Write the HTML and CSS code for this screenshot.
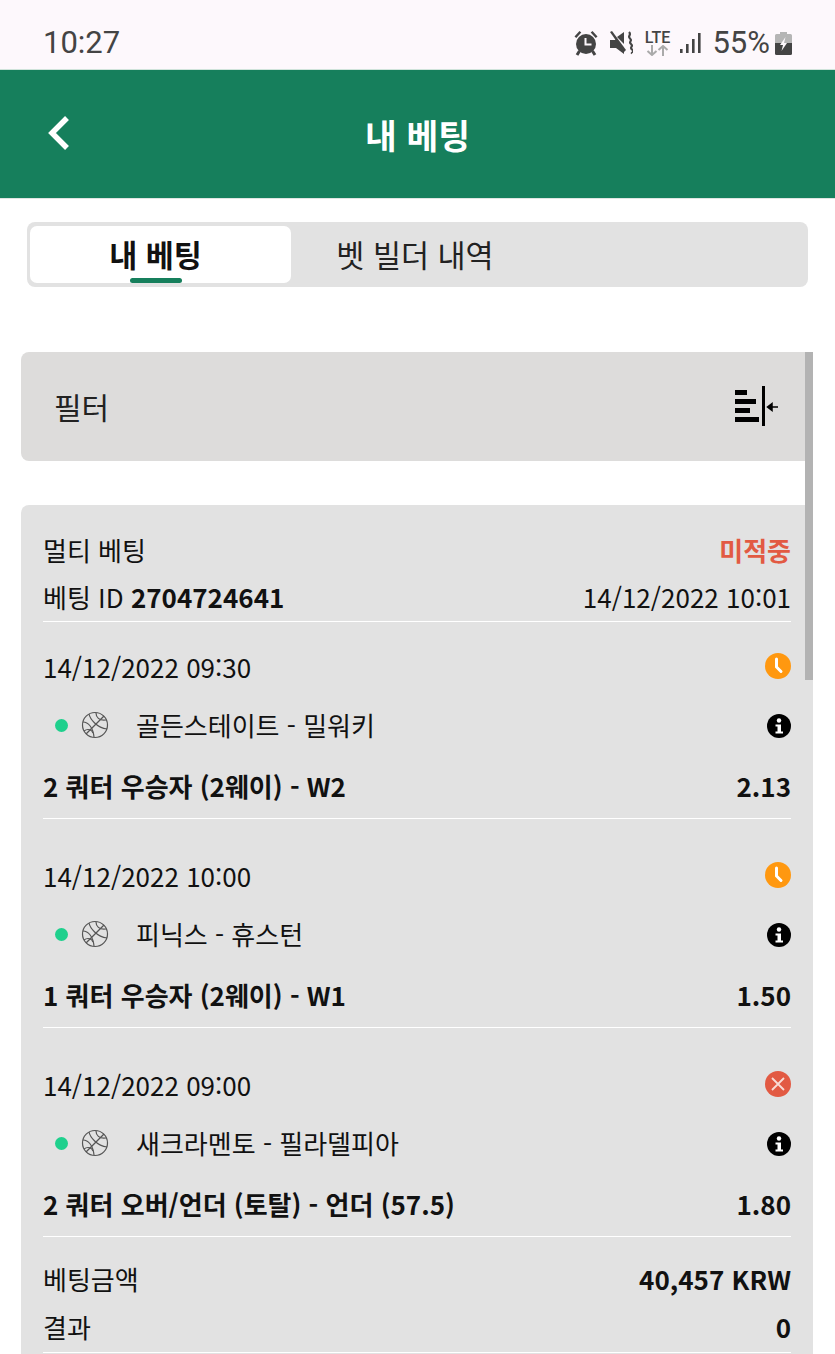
FILE: index.html
```html
<!DOCTYPE html>
<html lang="ko">

<head>
    <meta charset="UTF-8">
    <meta name="viewport" content="width=device-width, initial-scale=1.0">
    <title>내 베팅</title>
    <link rel="stylesheet" href="styles.css">
</head>

<body>
    <div class="status-bar">
        <span class="clock">10:27</span>
        <div class="status-icons">
            <svg width="24" height="26" viewBox="0 0 24 26" class="ic-alarm">
                <path d="M0.500 6.500L5.500 1l1.800 1.500-5 5.500zM23.500 6.500L18.500 1l-1.800 1.500 5 5.500z" fill="#444"/>
                <circle cx="12" cy="14" r="10" fill="#444"/>
                <path d="M11.500 8v6.500h6" fill="none" stroke="#fdf8fc" stroke-width="2"/>
                <path d="M5.500 21l-2.500 4M18.500 21l2.500 4" stroke="#444" stroke-width="3"/>
            </svg>
            <svg width="24" height="24" viewBox="0 0 24 24" class="ic-mute">
                <path d="M1 9h5l1-1 8 10v5l-8-6H1z" fill="#444"/>
                <path d="M8 6l7-5v12z" fill="#444"/>
                <path d="M1 1l2-1 14 19-2 2z" fill="#444"/>
                <path d="M20 1c3 3-2 4 1 6.500s-2 3 1 5.500-2 3 1 5.500-1 3 0 4" fill="none" stroke="#444" stroke-width="2.200"/>
            </svg>
            <div class="lte">
                <span>LTE</span>
                <svg width="24" height="11" viewBox="0 0 24 11">
                    <path d="M7 0v10M2.500 6l4.500 4 4.500-4" fill="none" stroke="#aaa" stroke-width="2"/>
                    <path d="M18 11V1M13.500 5L18 1l4.500 4" fill="none" stroke="#aaa" stroke-width="2"/>
                </svg>
            </div>
            <svg width="22" height="22" viewBox="0 0 22 22" class="ic-signal">
                <path d="M1 17h2.600v4H1zM7 12h2.600v9H7zM13 7h2.600v14H13zM19 1h2.600v20H19z" fill="#444"/>
            </svg>
            <span class="battery-pct">55%</span>
            <svg width="17" height="24" viewBox="0 0 17 24" class="ic-battery">
                <path d="M5 1h7v2h3.500a1.500 1.500 0 0 1 1.500 1.500V12H0V4.500A1.500 1.500 0 0 1 1.500 3H5z" fill="#b5b5b5"/>
                <path d="M0 12h17v10.500a1.500 1.500 0 0 1-1.500 1.500h-14A1.500 1.500 0 0 1 0 22.500z" fill="#444"/>
                <path d="M10.500 6L5 14h3l-1.500 6L12 12H9z" fill="#fdf8fc"/>
            </svg>
        </div>
    </div>

    <header class="app-header">
        <svg class="back" width="24" height="36" viewBox="0 0 24 36">
            <path d="M20 3L5 18l15 15" fill="none" stroke="#fff" stroke-width="5.500"/>
        </svg>
        <h1>내 베팅</h1>
    </header>

    <div class="tabs">
        <div class="tab active">내 베팅</div>
        <div class="tab">벳 빌더 내역</div>
    </div>

    <div class="content">
        <div class="scroll-thumb"></div>

        <div class="filter">
            <span>필터</span>
            <svg width="44" height="40" viewBox="0 0 44 40">
                <path d="M0 4h12v5H0zM0 13h21v5H0zM0 22h15v5H0zM0 31h24v5H0z" fill="#000"/>
                <path d="M27 0h3v40h-3z" fill="#000"/>
                <path d="M43 21H33M37 17.500L32.500 21l4.500 3.500z" fill="#000" stroke="#000" stroke-width="1.500"/>
            </svg>
        </div>

        <div class="bet-card">
            <div class="row summary">
                <span>멀티 베팅</span>
                <span class="lost">미적중</span>
            </div>
            <div class="row summary line">
                <span>베팅 ID <b>2704724641</b></span>
                <span>14/12/2022 10:01</span>
            </div>

            <div class="leg">
                <div class="row date-row">
                    <span>14/12/2022 09:30</span>
                    <svg class="status-ic" width="26" height="26" viewBox="0 0 26 26">
                        <circle cx="13" cy="13" r="13" fill="#ff9810"/>
                        <path d="M11.500 6v8l4.500 4.500" fill="none" stroke="#fff" stroke-width="3" stroke-linecap="round"/>
                    </svg>
                </div>
                <div class="row match-row">
                    <div class="match">
                        <i class="live-dot"></i>
                        <svg class="ball" width="28" height="28" viewBox="0 0 28 28"><use href="#basketball"/></svg>
                        <span>골든스테이트 - 밀워키</span>
                    </div>
                    <svg class="info" width="24" height="24" viewBox="0 0 24 24"><use href="#info"/></svg>
                </div>
                <div class="row market"><b>2 쿼터 우승자 (2웨이) - W2</b><b>2.13</b></div>
            </div>

            <div class="leg">
                <div class="row date-row">
                    <span>14/12/2022 10:00</span>
                    <svg class="status-ic" width="26" height="26" viewBox="0 0 26 26">
                        <circle cx="13" cy="13" r="13" fill="#ff9810"/>
                        <path d="M11.500 6v8l4.500 4.500" fill="none" stroke="#fff" stroke-width="3" stroke-linecap="round"/>
                    </svg>
                </div>
                <div class="row match-row">
                    <div class="match">
                        <i class="live-dot"></i>
                        <svg class="ball" width="28" height="28" viewBox="0 0 28 28"><use href="#basketball"/></svg>
                        <span>피닉스 - 휴스턴</span>
                    </div>
                    <svg class="info" width="24" height="24" viewBox="0 0 24 24"><use href="#info"/></svg>
                </div>
                <div class="row market"><b>1 쿼터 우승자 (2웨이) - W1</b><b>1.50</b></div>
            </div>

            <div class="leg">
                <div class="row date-row">
                    <span>14/12/2022 09:00</span>
                    <svg class="status-ic" width="26" height="26" viewBox="0 0 26 26">
                        <circle cx="13" cy="13" r="13" fill="#e25a43"/>
                        <path d="M7 7l12 12M19 7L7 19" fill="none" stroke="#f8dcd6" stroke-width="1.800"/>
                    </svg>
                </div>
                <div class="row match-row">
                    <div class="match">
                        <i class="live-dot"></i>
                        <svg class="ball" width="28" height="28" viewBox="0 0 28 28"><use href="#basketball"/></svg>
                        <span>새크라멘토 - 필라델피아</span>
                    </div>
                    <svg class="info" width="24" height="24" viewBox="0 0 24 24"><use href="#info"/></svg>
                </div>
                <div class="row market"><b>2 쿼터 오버/언더 (토탈) - 언더 (57.5)</b><b>1.80</b></div>
            </div>

            <div class="totals">
                <div class="row summary"><span>베팅금액</span><b>40,457 KRW</b></div>
                <div class="row summary line"><span>결과</span><b>0</b></div>
            </div>
        </div>
    </div>

    <!-- shared icons -->
    <svg class="defs" width="0" height="0">
        <defs>
            <g id="basketball" fill="none" stroke="#555" stroke-width="1.200">
                <circle cx="14" cy="14" r="12.500"/>
                <path d="M23 5L5 23"/>
                <path d="M8 3c1 5 8 14 18 15"/>
                <path d="M2 11c5 0 10 5 11 15"/>
                <path d="M15 2c0 4 3 8 10 7"/>
                <path d="M3 20c4-3 8-1 9 2"/>
            </g>
            <g id="info">
                <circle cx="12" cy="12" r="12" fill="#000"/>
                <circle cx="12" cy="6.500" r="2.200" fill="#fff"/>
                <path d="M8.500 10.500H14v7h2v2H8.500v-2h2v-5h-2z" fill="#fff"/>
            </g>
        </defs>
    </svg>
</body>

</html>
```

FILE: styles.css
```css
html,
body {
    margin: 0;
    padding: 0;
    height: 1354px;
    overflow: hidden;
}

body {
    font-family: "Noto Sans CJK KR", "Noto Sans", sans-serif;
    background-color: #fff;
    color: #111;
}

b {
    font-weight: 700;
}

.status-bar {
    height: 69px;
    box-sizing: border-box;
    padding: 0 43px;
    display: flex;
    align-items: center;
    justify-content: space-between;
    background-color: #fdf8fc;
    color: #444;
}

.clock {
    font-family: Roboto, sans-serif;
    font-size: 31px;
    margin-top: 15px;
}

.status-icons {
    display: flex;
    align-items: center;
    margin-top: 16px;
}

.ic-mute {
    margin-left: 11px;
}

.lte {
    display: flex;
    flex-direction: column;
    align-items: center;
    width: 26px;
    margin-left: 11px;
    font-family: Roboto, sans-serif;
    font-size: 16px;
    font-weight: 500;
    line-height: 15px;
}

.lte svg {
    display: block;
}

.ic-signal {
    margin-left: 9px;
}

.battery-pct {
    font-family: Roboto, sans-serif;
    font-size: 31px;
    margin-left: 11px;
}

.ic-battery {
    margin-left: 5px;
}

.app-header {
    height: 130px;
    box-sizing: border-box;
    border-top: 1px solid #cfe3da;
    border-bottom: 1px solid #dfe5e2;
    background-color: #167f5c;
    display: flex;
    align-items: center;
    justify-content: center;
    position: relative;
}

.back {
    position: absolute;
    left: 47px;
    top: 45px;
}

.app-header h1 {
    margin: 0;
    color: #fff;
    font-size: 34.500px;
    font-weight: 700;
    line-height: 44px;
}

.tabs {
    margin: 23px 27px 0;
    height: 65px;
    box-sizing: border-box;
    padding: 4px 3px;
    display: flex;
    background-color: #e2e2e2;
    border-radius: 8px;
}

.tab {
    width: 261px;
    font-size: 30.500px;
    line-height: 57px;
    text-align: center;
    color: #222;
}

.tab.active {
    position: relative;
    box-sizing: border-box;
    padding-right: 10px;
    background-color: #fff;
    border-radius: 7px;
    font-weight: 700;
    color: #111;
}

.tab.active::after {
    content: "";
    position: absolute;
    left: 100px;
    bottom: 0;
    width: 52px;
    height: 5px;
    border-radius: 3px;
    background-color: #167f5c;
}

.tab:not(.active) {
    width: 248px;
}

.content {
    position: relative;
    margin: 65px 22px 0 21px;
}

.scroll-thumb {
    position: absolute;
    top: 0;
    right: 0;
    width: 8px;
    height: 328px;
    background-color: #b3b3b3;
    z-index: 2;
}

.filter {
    height: 109px;
    box-sizing: border-box;
    padding: 0 34px 2px 33px;
    display: flex;
    align-items: center;
    justify-content: space-between;
    background-color: #dddcdb;
    border-radius: 8px;
    font-size: 30px;
    color: #222;
}

.bet-card {
    margin-top: 44px;
    padding: 23px 22px 20px;
    background-color: #e2e2e2;
    border-radius: 8px 8px 0 0;
    font-size: 26px;
}

.row {
    display: flex;
    align-items: center;
    justify-content: space-between;
}

.summary {
    height: 46px;
    box-sizing: border-box;
    padding-bottom: 3px;
}

.line {
    border-bottom: 1px solid #fff;
    height: 48px;
}

.lost {
    color: #e25a43;
    font-weight: 700;
}

.leg {
    height: 197px;
    margin-bottom: 12px;
    border-bottom: 1px solid #fff;
    padding-top: 21px;
    box-sizing: border-box;
}

.date-row {
    height: 46px;
}

.match-row {
    height: 46px;
    margin-top: 12px;
}

.match {
    display: flex;
    align-items: center;
}

.live-dot {
    width: 13px;
    height: 13px;
    margin-left: 12px;
    margin-top: 2px;
    border-radius: 50%;
    background-color: #1fd08d;
}

.ball {
    margin-left: 13px;
    margin-right: 27px;
    margin-top: 2px;
}

.info {
    margin-right: 0;
    margin-top: 4px;
}

.market {
    height: 46px;
    margin-top: 15px;
}

.totals {
    padding-top: 8px;
}

.totals .line {
    height: 50px;
}

.defs {
    position: absolute;
}
```
